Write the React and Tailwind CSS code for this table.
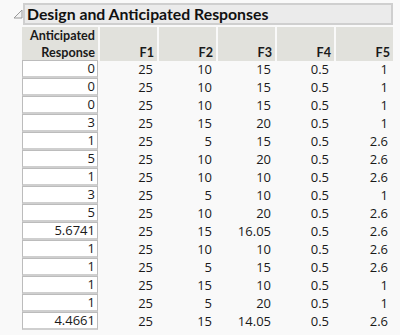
const rows = [
  ['0', 25, 10, 15, 0.5, 1],
  ['0', 25, 10, 15, 0.5, 1],
  ['0', 25, 10, 15, 0.5, 1],
  ['3', 25, 15, 20, 0.5, 1],
  ['1', 25, 5, 15, 0.5, 2.6],
  ['5', 25, 10, 20, 0.5, 2.6],
  ['1', 25, 10, 10, 0.5, 2.6],
  ['3', 25, 5, 10, 0.5, 1],
  ['5', 25, 10, 20, 0.5, 2.6],
  ['5.6741', 25, 15, 16.05, 0.5, 2.6],
  ['1', 25, 10, 10, 0.5, 2.6],
  ['1', 25, 5, 15, 0.5, 2.6],
  ['1', 25, 15, 10, 0.5, 1],
  ['1', 25, 5, 20, 0.5, 1],
  ['4.4661', 25, 15, 14.05, 0.5, 2.6],
];

const App = () => {
  return (
    <div className="w-[400px] h-[335px] overflow-hidden bg-[#f9f9f9] text-[#1a1a1a]" style={{ fontFamily: '"Open Sans", "Noto Sans", sans-serif' }}>
      {/* Title */}
      <div className="flex items-start pt-[3px] pl-[13px]">
        <svg width="10" height="10" viewBox="0 0 10 10" className="mt-[6px]">
          <path d="M9 1 L9 9 L1 9 Z" fill="#f4f4f4" stroke="#9a9a9a" strokeWidth="1" />
        </svg>
        <div className="w-[370px] h-[22px] bg-[#ebebeb] border-2 border-[#cfcfcf] flex items-center pl-[2px]">
          <span className="text-[15.8px] font-bold leading-none text-[#111] font-['Lato',sans-serif]">Design and Anticipated Responses</span>
        </div>
      </div>

      {/* Table */}
      <div className="ml-[22px] mt-[2px] w-[371px]">
        <div className="grid grid-cols-[76px_57px_57px_57px_57px_57px] gap-x-[2px] h-[32px] font-['Lato',sans-serif]">
          <div className="bg-[#e1e1dc] text-[12.6px] font-bold leading-[17px] text-right pr-[3px] pt-[0px]">
            Anticipated<br />Response
          </div>
          {['F1', 'F2', 'F3', 'F4', 'F5'].map((f) => (
            <div key={f} className="bg-[#e1e1dc] text-[12.6px] font-bold leading-[17px] flex items-end justify-end pr-[3px] pb-[0px]">
              {f}
            </div>
          ))}
        </div>
        <div className="mt-[1px]">
          {rows.map((r, i) => (
            <div key={i} className="grid grid-cols-[76px_57px_57px_57px_57px_57px] gap-x-[2px] h-[18px] text-[13px] leading-[18px]">
              <div className="bg-white border border-[#bcbcbc] border-b-2 border-b-[#cfcfcf] text-right pr-[2px] leading-[15px]">
                {r[0]}
              </div>
              {r.slice(1).map((v, j) => (
                <div key={j} className={j >= 3 ? 'text-right pr-[5px]' : 'text-right pr-[4px]'}>
                  {v}
                </div>
              ))}
            </div>
          ))}
        </div>
      </div>
    </div>
  );
};

export default App;
